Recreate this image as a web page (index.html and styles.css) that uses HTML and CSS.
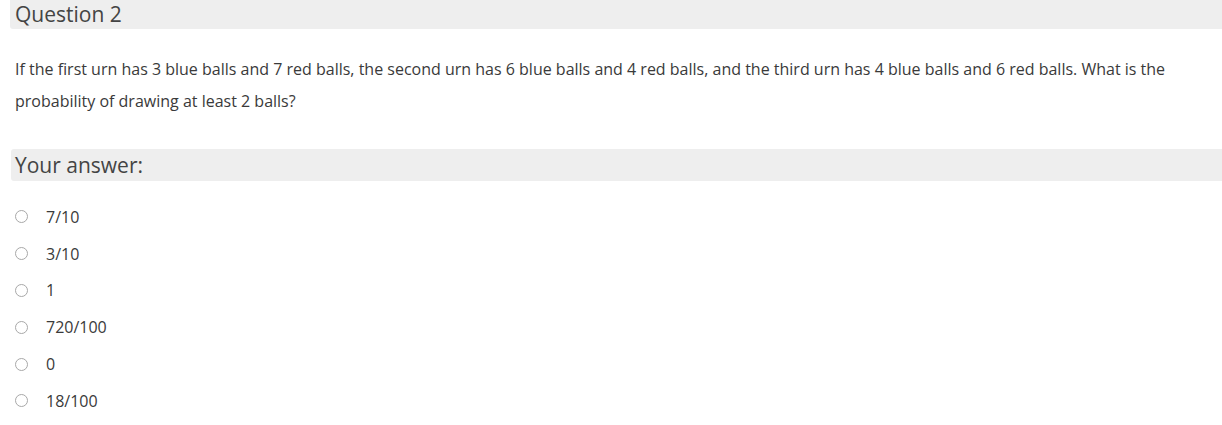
FILE: index.html
```html
<!DOCTYPE html>
<html>
<head>
<meta charset="utf-8">
<link rel="stylesheet" href="styles.css">
</head>
<body>
<div class="page">
  <div class="qhead">Question 2</div>
  <p class="qtext">If the first urn has 3 blue balls and 7 red balls, the second urn has 6 blue balls and 4 red balls, and the third urn has 4 blue balls and 6 red balls. What is the probability of drawing at least 2 balls?</p>
  <div class="ahead">Your answer:</div>
  <ul class="options">
    <li class="opt"><span class="radio"></span><span class="label">7/10</span></li>
    <li class="opt"><span class="radio"></span><span class="label">3/10</span></li>
    <li class="opt"><span class="radio"></span><span class="label">1</span></li>
    <li class="opt"><span class="radio"></span><span class="label">720/100</span></li>
    <li class="opt"><span class="radio"></span><span class="label">0</span></li>
    <li class="opt"><span class="radio"></span><span class="label">18/100</span></li>
  </ul>
</div>
</body>
</html>
```
FILE: styles.css
```css
html, body {
  margin: 0;
  padding: 0;
  background: #fff;
}
body {
  font-family: "Open Sans", "Liberation Sans", sans-serif;
  color: #333;
}
.page {
  padding-left: 10px;
}
.qhead {
  background: #eeeeee;
  height: 29px;
  line-height: 28px;
  font-size: 21px;
  color: #444;
  padding-left: 5px;
  border-radius: 0 0 0 3px;
}
.qtext {
  margin: 0;
  padding: 24px 40px 0 5px;
  font-size: 16px;
  line-height: 32px;
  color: #3a3a3a;
}
.ahead {
  margin: 32px 0 0 1px;
  background: #eeeeee;
  height: 32px;
  line-height: 32px;
  font-size: 21px;
  color: #444;
  padding-left: 4px;
  border-radius: 3px 0 0 3px;
}
.options {
  list-style: none;
  margin: 0;
  padding: 17.5px 0 0 5px;
}
.opt {
  display: flex;
  align-items: center;
  height: 36.8px;
  font-size: 16px;
  color: #3a3a3a;
}
.radio {
  width: 11px;
  height: 11px;
  border: 1px solid #a8a8a8;
  border-radius: 50%;
  margin-right: 18px;
  box-sizing: content-box;
}
```
